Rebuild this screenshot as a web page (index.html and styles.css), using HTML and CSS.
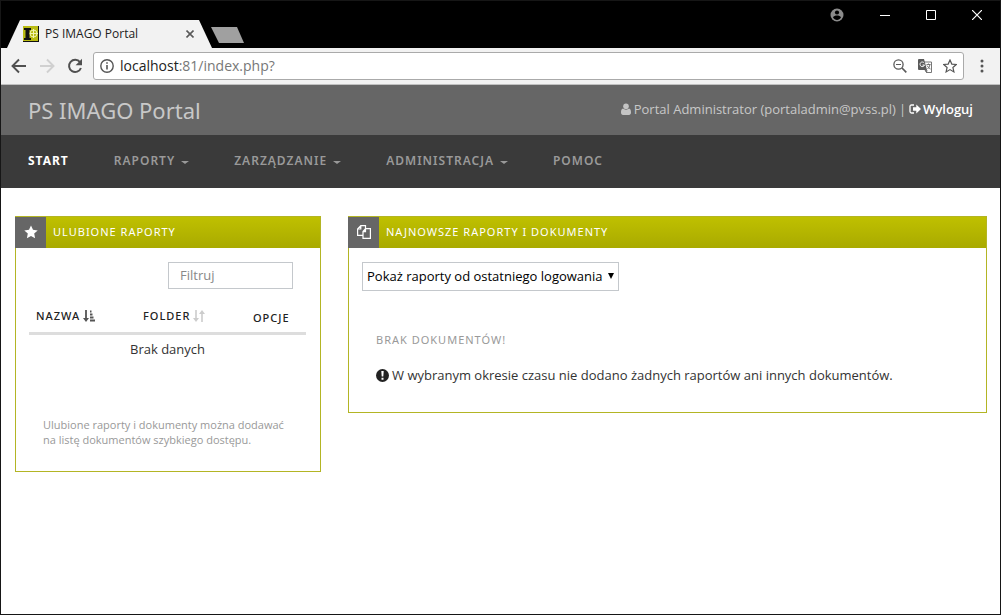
FILE: index.html
```html
<!DOCTYPE html>
<html lang="pl">
<head>
<meta charset="utf-8">
<title>PS IMAGO Portal</title>
<link rel="stylesheet" href="styles.css">
</head>
<body>
<div class="window">
  <div class="titlebar">
    <div class="tab">
      <svg class="favicon" width="16" height="16" viewBox="0 0 16 16"><path fill="#111" d="M0 0h16v16H0z"/><path fill="#b9bb12" d="M0 0h15v15H0z"/><path fill="#111" d="M1 2h7v2H6.500v8H8v2H1v-2h1.500V4H1z"/><circle cx="10.500" cy="7.500" r="3.500" fill="none" stroke="#f3f3b0"/><path d="M7 7.500h8M10.500 3v9" stroke="#f3f3b0"/></svg>
      <span class="tab-title">PS IMAGO Portal</span>
      <button class="bare" aria-label="Zamknij kartę"><svg width="8" height="8" viewBox="0 0 8 8"><path d="M.5.5l7 7M7.500.5l-7 7" stroke="#5a5a5a" stroke-width="1.600"/></svg></button>
    </div>
    <button class="new-tab" aria-label="Nowa karta"></button>
    <div class="window-controls">
      <button class="bare" aria-label="Profil"><svg width="14" height="14" viewBox="0 0 14 14"><circle cx="7" cy="7" r="6.500" fill="#8b8b8b"/><circle cx="7" cy="4.500" r="2.100" fill="#000"/><path d="M3 9.600C3.500 8 5.500 7.600 7 7.600s3.500.4 4 2C10 11.200 8.600 12 7 12s-3-.8-4-2.400z" fill="#000"/></svg></button>
      <button class="bare" aria-label="Minimalizuj"><svg width="10" height="10" viewBox="0 0 10 10"><path d="M0 5.500h10" stroke="#fff"/></svg></button>
      <button class="bare" aria-label="Maksymalizuj"><svg width="10" height="10" viewBox="0 0 10 10"><path d="M.5.5h9v9h-9z" fill="none" stroke="#fff"/></svg></button>
      <button class="bare" aria-label="Zamknij"><svg width="10" height="10" viewBox="0 0 10 10"><path d="M0 0l10 10M10 0L0 10" stroke="#fff" stroke-width="1.200"/></svg></button>
    </div>
  </div>
  <div class="toolbar">
    <button class="bare" aria-label="Wstecz"><svg width="16" height="16" viewBox="0 0 16 16"><path d="M15 8H2.500M8 1.500L1.500 8 8 14.500" fill="none" stroke="#505050" stroke-width="1.900"/></svg></button>
    <button class="bare" aria-label="Dalej"><svg width="16" height="16" viewBox="0 0 16 16"><path d="M1 8h12.500M8 1.500L14.500 8 8 14.500" fill="none" stroke="#d0d0d0" stroke-width="1.900"/></svg></button>
    <button class="bare" aria-label="Odśwież"><svg width="16" height="16" viewBox="0 0 16 16"><path d="M13 4.200A6.100 6.100 0 1 0 13.900 10" fill="none" stroke="#505050" stroke-width="2"/><path d="M15 .8v6.400H8.600z" fill="#505050"/></svg></button>
    <div class="address">
      <svg width="14" height="14" viewBox="0 0 14 14"><circle cx="7" cy="7" r="6.200" fill="none" stroke="#555" stroke-width="1.400"/><path d="M7 6v4.500M7 3.200v1.600" stroke="#555" stroke-width="1.600"/></svg>
      <span class="url"><b>localhost</b>:81/index.php?</span>
      <button class="bare" aria-label="Powiększenie"><svg width="14" height="14" viewBox="0 0 14 14"><circle cx="5.500" cy="5.500" r="4.600" fill="none" stroke="#5a5a5a" stroke-width="1.300"/><path d="M3 5.500h5" stroke="#5a5a5a"/><path d="M9 9l4.300 4.300" stroke="#5a5a5a" stroke-width="1.700"/></svg></button>
      <button class="bare" aria-label="Tłumacz"><svg width="14" height="14" viewBox="0 0 14 14"><path d="M5.500 3h8v10.500h-5z" fill="#fff" stroke="#777"/><path d="M0 1q0-1 1-1h5l3 11H1q-1 0-1-1z" fill="#5a5a5a"/><path d="M6.200 4A2.300 2.300 0 1 0 6.500 6H4.500" fill="none" stroke="#fff"/><path d="M8.500 5.500h4M10.500 4.500v1M12 5.500q-.5 3-2.500 4.500M9 6.500q1.500 2.500 3.500 3.500M7 11l1.500 2.500L9 11z" fill="none" stroke="#666" stroke-width=".9"/></svg></button>
      <button class="bare" aria-label="Dodaj zakładkę"><svg width="14" height="14" viewBox="0 0 14 14"><path d="M7 1l1.800 4.100 4.500.4-3.400 3 1 4.400L7 10.600l-3.900 2.300 1-4.400-3.400-3 4.500-.4z" fill="none" stroke="#555" stroke-width="1.200"/></svg></button>
    </div>
    <button class="bare menu" aria-label="Menu"><svg width="4" height="14" viewBox="0 0 4 14"><g fill="#555"><circle cx="2" cy="2" r="1.500"/><circle cx="2" cy="7" r="1.500"/><circle cx="2" cy="12" r="1.500"/></g></svg></button>
  </div>
  <header class="banner">
    <h1>PS IMAGO Portal</h1>
    <div class="user">
      <svg width="10" height="12" viewBox="0 0 10 12"><circle cx="5" cy="3.300" r="2.800" fill="#c4c4c4"/><path d="M2 5.500C.5 5.800 0 7.500 0 9.500 0 11 .8 12 2 12h6c1.200 0 2-1 2-2.500 0-2-.5-3.700-2-4-1.500 1.500-4.500 1.500-6 0z" fill="#c4c4c4"/></svg>
      <span>Portal Administrator (portaladmin@pvss.pl)</span>
      <span>|</span>
      <a href="#" class="logout"><svg width="12" height="10" viewBox="0 0 12 10"><path d="M5 1H2.500Q1 1 1 2.500v5Q1 9 2.500 9H5" fill="none" stroke="#fff" stroke-width="1.300"/><path d="M4 3.200h3.300V.4L12 5 7.300 9.600V6.800H4z" fill="#fff"/></svg>Wyloguj</a>
    </div>
  </header>
  <nav class="nav">
    <a href="#" class="active">START</a>
    <a href="#">RAPORTY<i class="caret"></i></a>
    <a href="#">ZARZĄDZANIE<i class="caret"></i></a>
    <a href="#">ADMINISTRACJA<i class="caret"></i></a>
    <a href="#">POMOC</a>
  </nav>
  <main class="content">
    <section class="panel favorites">
      <div class="panel-head">
        <span class="panel-icon"><svg width="14" height="14" viewBox="0 0 14 14"><path d="M7 .5l2 4.300 4.700.6-3.500 3.200.9 4.700L7 11l-4.100 2.300.9-4.700L.3 5.400 5 4.800z" fill="#fff"/></svg></span>
        <h2>ULUBIONE RAPORTY</h2>
      </div>
      <div class="panel-body">
        <input class="filter" type="text" placeholder="Filtruj" aria-label="Filtruj">
        <table class="reports">
          <thead>
            <tr>
              <th class="name"><button class="sort">NAZWA<svg width="12" height="12" viewBox="0 0 12 12"><path d="M3 0v9" stroke="#555" stroke-width="1.800"/><path d="M0 8h6l-3 4z" fill="#555"/><path d="M7 1.500h1.500M7 4.500h2.500M7 7.500h3.500M7 10.500h5" stroke="#555" stroke-width="1.800"/></svg></button></th>
              <th class="folder"><button class="sort">FOLDER<svg width="12" height="12" viewBox="0 0 12 12"><g fill="#ccc"><path d="M2.200 0h1.600v8H6l-3 4-3-4h2.200zM8.200 12h1.600V4H12L9 0 6 4h2.200z"/></g></svg></button></th>
              <th>OPCJE</th>
            </tr>
          </thead>
          <tbody><tr><td colspan="3">Brak danych</td></tr></tbody>
        </table>
        <p class="note">Ulubione raporty i dokumenty można dodawać na listę dokumentów szybkiego dostępu.</p>
      </div>
    </section>
    <section class="panel latest">
      <div class="panel-head">
        <span class="panel-icon"><svg width="14" height="14" viewBox="0 0 14 14"><path d="M8.500 3.600h4.900v9.700H6V6.500zM8.500 3.600v3H6M6 10.300H.6V4L3.800.7h4.700v2.900M3.800.7V4H.6" fill="none" stroke="#fff" stroke-width="1.200"/></svg></span>
        <h2>NAJNOWSZE RAPORTY I DOKUMENTY</h2>
      </div>
      <div class="panel-body">
        <div class="select-wrap">
          <select aria-label="Okres raportów"><option>Pokaż raporty od ostatniego logowania</option></select>
          <svg class="select-arrow" width="6" height="6" viewBox="0 0 6 6"><path d="M0 0h6L3 6z" fill="#000"/></svg>
        </div>
        <h3>BRAK DOKUMENTÓW!</h3>
        <p class="message"><svg width="13" height="13" viewBox="0 0 13 13"><circle cx="6.500" cy="6.500" r="6.500" fill="#222"/><path d="M5.300 2h2.400l-.4 5.500H5.700zM5.500 8.700h2v2h-2z" fill="#fff"/></svg>W wybranym okresie czasu nie dodano żadnych raportów ani innych dokumentów.</p>
      </div>
    </section>
  </main>
</div>
</body>
</html>
```
FILE: styles.css
```css
* { box-sizing: border-box; }
body {
  margin: 0;
  font-family: "Open Sans", sans-serif;
  font-size: 13px;
  line-height: 18px;
  color: #333;
  background: #fff;
}
h1, h2, h3, p { margin: 0; font-weight: 400; }
h1, h2, h3, th, .nav { font-family: "Noto Sans", sans-serif; }
a { text-decoration: none; color: inherit; }
svg { display: block; flex: none; }
button, input, select { font: inherit; color: inherit; }
.bare { display: block; padding: 0; border: 0; background: none; }

.window { min-height: 100vh; border: 1px solid #161616; }

.titlebar { display: flex; height: 47px; padding-left: 6px; background: #000; align-items: flex-end; }
.tab {
  display: flex;
  align-items: center;
  width: 205px;
  height: 28px;
  padding: 0 18px 0 16px;
  background: #f2f2f2;
  clip-path: polygon(0 100%, 13px 0, 192px 0, 100% 100%);
}
.tab-title { flex: 1; margin-left: 6px; font-size: 12px; color: #222; }
.new-tab {
  width: 33px;
  height: 16px;
  margin: 0 0 5px -1px;
  padding: 0;
  border: 0;
  background: #a0a0a0;
  clip-path: polygon(0 0, 26px 0, 100% 100%, 8px 100%);
}
.window-controls {
  display: flex;
  align-self: flex-start;
  align-items: center;
  gap: 36px;
  margin-left: auto;
  padding: 7px 18px 0 0;
}

.toolbar {
  display: flex;
  align-items: center;
  height: 37px;
  padding: 0 16px 0 10px;
  gap: 12px;
  background: #f2f2f2;
  border-bottom: 1px solid #c0c0c0;
}
.address {
  display: flex;
  flex: 1;
  align-items: center;
  gap: 11px;
  height: 28px;
  margin-left: -2px;
  padding: 0 6px;
  border: 1px solid #aaa;
  border-radius: 3px;
  background: #fff;
}
.url { flex: 1; margin-left: -5px; padding-bottom: 1px; font-size: 14px; color: #777; }
.url b { font-weight: 400; color: #222; }
.menu { margin-left: 4px; }

.banner {
  display: flex;
  justify-content: space-between;
  align-items: center;
  height: 50px;
  padding: 0 27px;
  background: #666;
  color: #c8c8c8;
}
.banner h1 { font-size: 22px; line-height: 30px; }
.user { display: flex; align-items: center; gap: 3px; padding-bottom: 2px; }
.logout { display: flex; align-items: center; gap: 2px; font-weight: 600; color: #fff; }

.nav {
  display: flex;
  align-items: center;
  gap: 45px;
  height: 53px;
  padding: 0 27px 2px;
  background: #3a3a3a;
  color: #999;
  font-size: 12px;
  font-weight: 600;
  letter-spacing: 1px;
}
.nav a { display: flex; align-items: center; }
.nav .active { color: #fff; font-weight: 700; }
.caret { margin: 3px 0 0 6px; border: 4px solid transparent; border-top: 3px solid #999; border-bottom: 0; }

.content { display: grid; grid-template-columns: repeat(12, 1fr); gap: 27px; align-items: start; padding: 28px 13px 28px 14px; }
.panel { border: 1px solid #b3b524; }
.favorites { grid-column: span 4; }
.latest { grid-column: span 8; }
.panel-head { display: flex; align-items: center; height: 31px; background: linear-gradient(#bfc000, #a9aa00); }
.panel-icon { display: flex; align-items: center; justify-content: center; width: 31px; height: 31px; margin-left: -1px; padding-bottom: 2px; background: #666; }
.panel-head h2 { margin-left: 7px; padding-bottom: 2px; font-size: 11px; letter-spacing: 1px; color: #fff; }
.panel-body { padding: 14px 14px 14px 13px; }

.filter {
  display: block;
  width: 125px;
  height: 27px;
  margin: 0 13px 12px auto;
  padding: 0 11px 2px;
  border: 1px solid #c4c8cc;
  background: #fff;
}
.filter::placeholder { color: #888; opacity: 1; }
.reports { width: 100%; table-layout: fixed; border-collapse: collapse; }
.reports th {
  height: 32px;
  padding: 4px 0 0 7px;
  border-bottom: 3px solid #ddd;
  text-align: left;
  font-size: 11px;
  font-weight: 500;
  letter-spacing: 1px;
  color: #222;
}
.reports .name { width: 107px; padding-top: 0; }
.reports .folder { width: 110px; padding-top: 0; }
.sort { display: flex; align-items: center; gap: 3px; padding: 0; border: 0; background: none; letter-spacing: inherit; }
.reports td { height: 31px; padding: 0; text-align: center; }
.note { margin: 53px 14px 10px; font-size: 11px; line-height: 15px; color: #999; }

.select-wrap { display: inline-block; position: relative; vertical-align: top; }
.select-wrap select {
  display: block;
  appearance: none;
  height: 29px;
  padding: 0 15px 2px 4px;
  border: 1px solid #c4c8cc;
  border-radius: 0;
  background: #fff;
  color: #000;
}
.select-arrow { position: absolute; right: 5px; top: 11px; pointer-events: none; }
.latest h3 { margin: 40px 14px 0; font-size: 11px; letter-spacing: 1px; color: #999; }
.message { display: flex; align-items: center; gap: 3px; margin: 17px 14px 14px; }
```
